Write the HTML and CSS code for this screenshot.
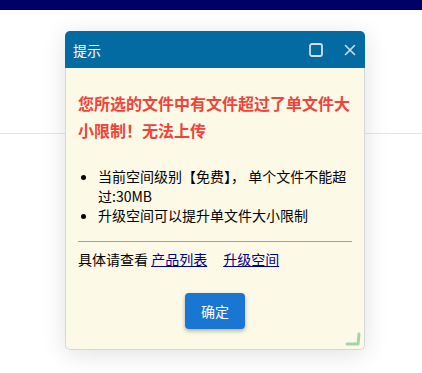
FILE: index.html
```html
<!DOCTYPE html>
<html lang="zh-CN">
<head>
    <meta charset="UTF-8">
    <title>提示</title>
    <link rel="stylesheet" href="styles.css">
</head>
<body>
    <div class="topbar"></div>
    <div class="page">
        <div class="divider"></div>
    </div>

    <div class="dialog">
        <div class="dialog-header">
            <span class="dialog-title">提示</span>
            <div class="dialog-tools">
                <svg class="tool" width="16" height="16" viewBox="0 0 16 16">
                    <rect x="2" y="2" width="12" height="12" rx="2" fill="none" stroke="#d5dde6" stroke-width="1.8"/>
                </svg>
                <svg class="tool" width="16" height="16" viewBox="0 0 16 16">
                    <path d="M3.5 3.5 L12.5 12.5 M12.5 3.5 L3.5 12.5" stroke="#d5dde6" stroke-width="1.6" stroke-linecap="round"/>
                </svg>
            </div>
        </div>
        <div class="dialog-body">
            <h3 class="warn">您所选的文件中有文件超过了单文件大小限制！无法上传</h3>
            <ul class="reasons">
                <li>当前空间级别【免费】， 单个文件不能超过:30MB</li>
                <li>升级空间可以提升单文件大小限制</li>
            </ul>
            <hr>
            <p class="more">具体请查看 <a href="#">产品列表</a><a class="next" href="#">升级空间</a></p>
            <div class="actions">
                <button>确定</button>
            </div>
            <svg class="grip" width="16" height="16" viewBox="0 0 16 16">
                <path d="M2 13 L13 13 L14 3" fill="none" stroke="#9fd8a6" stroke-width="3" stroke-linecap="round" stroke-linejoin="round"/>
            </svg>
        </div>
    </div>
</body>
</html>
```

FILE: styles.css
```css
body {
    margin: 0;
    font-family: "Noto Sans CJK SC", "Noto Sans", sans-serif;
    background-color: #ffffff;
    color: #000000;
}
.topbar {
    height: 9px;
    background-color: #000066;
    border-bottom: 1px solid #000000;
}
.page {
    padding-top: 123px;
}
.divider {
    border-top: 1px solid #e6e6e6;
}
.dialog {
    position: absolute;
    left: 65px;
    top: 31px;
    width: 300px;
    border-radius: 5px;
    background-color: #fdf9e7;
    box-shadow: 0 4px 24px rgba(0, 0, 0, 0.12);
}
.dialog-header {
    height: 37px;
    display: flex;
    align-items: center;
    justify-content: space-between;
    padding: 0 7px 0 8px;
    background-color: #046aa2;
    color: #ffffff;
    border-radius: 5px 5px 0 0;
}
.dialog-title {
    font-size: 14px;
}
.dialog-tools {
    display: flex;
    gap: 18px;
    align-items: center;
}
.tool {
    display: block;
}
.dialog-body {
    position: relative;
    padding: 22px 12px 20px;
    border: 1px solid #d3d8e0;
    border-top: none;
    border-radius: 0 0 5px 5px;
}
.warn {
    margin: 0;
    font-size: 16px;
    line-height: 27px;
    color: #f2433a;
}
.reasons {
    margin: 23px 0 0;
    padding-left: 20px;
    font-size: 14px;
    line-height: 19.5px;
}
hr {
    margin: 15px 0 0;
    border: none;
    border-top: 1px solid #a0a0a0;
}
.more {
    margin: 7px 0 0;
    font-size: 14px;
    line-height: 20px;
}
.more a {
    color: #00008b;
}
.more .next {
    margin-left: 16px;
}
.actions {
    margin-top: 24px;
    text-align: center;
}
button {
    width: 60px;
    height: 36px;
    border: none;
    border-radius: 4px;
    background-color: #1976d2;
    color: #ffffff;
    font-family: inherit;
    font-size: 14px;
    box-shadow: 0 2px 4px rgba(0, 0, 0, 0.3);
    cursor: pointer;
}
.grip {
    position: absolute;
    right: 3px;
    bottom: 2px;
}
```
